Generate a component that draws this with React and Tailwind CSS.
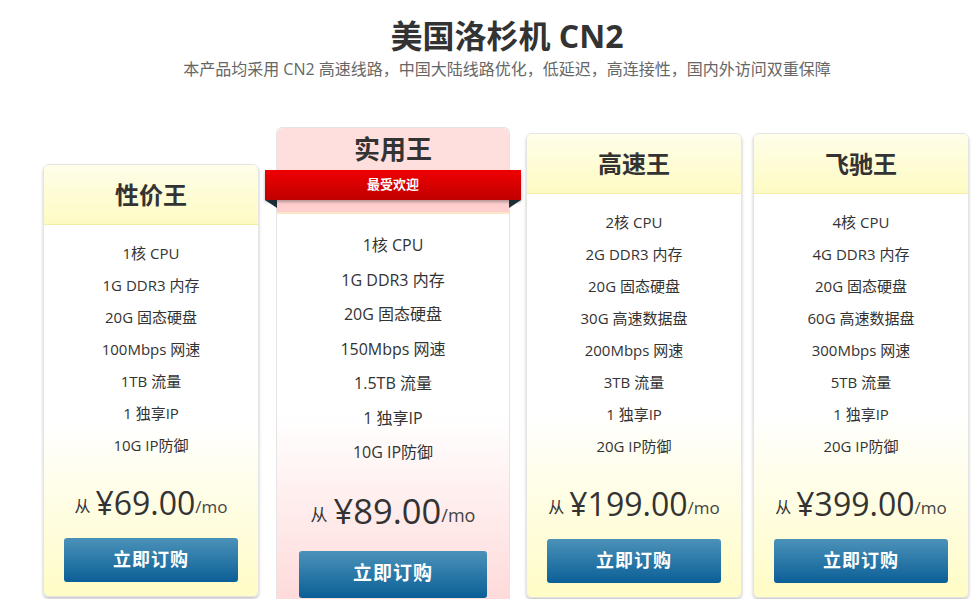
import React from 'react';

const plans = [
    {
        name: '性价王',
        features: ['1核 CPU', '1G DDR3 内存', '20G 固态硬盘', '100Mbps 网速', '1TB 流量', '1 独享IP', '10G IP防御'],
        price: '69.00',
        wrap: 'ml-[43px] mt-[37px]',
    },
    {
        name: '实用王',
        features: ['1核 CPU', '1G DDR3 内存', '20G 固态硬盘', '150Mbps 网速', '1.5TB 流量', '1 独享IP', '10G IP防御'],
        price: '89.00',
        featured: true,
        wrap: 'ml-[17px]',
    },
    {
        name: '高速王',
        features: ['2核 CPU', '2G DDR3 内存', '20G 固态硬盘', '30G 高速数据盘', '200Mbps 网速', '3TB 流量', '1 独享IP', '20G IP防御'],
        price: '199.00',
        wrap: 'ml-[16px] mt-[6px]',
    },
    {
        name: '飞驰王',
        features: ['4核 CPU', '4G DDR3 内存', '20G 固态硬盘', '60G 高速数据盘', '300Mbps 网速', '5TB 流量', '1 独享IP', '20G IP防御'],
        price: '399.00',
        wrap: 'ml-[11px] mt-[6px]',
    },
];

const PlanCard = ({ plan }) => (
    <div className={`${plan.wrap} w-[216px] shrink-0 rounded-[6px] border border-[#e4e4e4] shadow-[0_2px_3px_rgba(0,0,0,0.22)] bg-[linear-gradient(to_bottom,#ffffff_60%,#fffcc6)] overflow-hidden`}>
        {/* 头部 */}
        <div className="h-[60px] flex items-center justify-center bg-[linear-gradient(to_bottom,#fffeea,#fdfbc2)] border-b border-[#f1eda4]">
            <h3 className="text-[24px] font-bold text-[#333]">{plan.name}</h3>
        </div>
        <ul className="pt-[12px] text-center text-[15px] leading-[32px] text-[#333]">
            {plan.features.map((f) => (
                <li key={f}>{f}</li>
            ))}
        </ul>
        <div className="mt-[22px] h-[40px] flex items-center justify-center text-[#333]">
            <span className="text-[16px] mr-[5px] mt-[6px]">从</span>
            <span className="text-[32px] leading-none">¥{plan.price}</span>
            <span className="text-[17px] text-[#444] mt-[7px]">/mo</span>
        </div>
        <div className="px-[20px] pt-[15px] pb-[14px]">
            <button className="w-full h-[44px] rounded-[3px] bg-[linear-gradient(to_bottom,#4b92b9,#0b5f97)] text-white text-[18px] font-bold tracking-[1px] font-['Liberation_Serif','Noto_Sans_CJK_SC',serif]">
                立即订购
            </button>
        </div>
    </div>
);

const FeaturedCard = ({ plan }) => (
    <div className={`${plan.wrap} w-[234px] shrink-0 relative`}>
        <div className="rounded-t-[6px] border border-[#e4e4e4] border-b-0 bg-[linear-gradient(to_bottom,#ffffff_60%,#ffd9d9)] h-[480px]">
            <div className="h-[42px] flex items-center justify-center bg-[#ffdede] rounded-t-[6px]">
                <h3 className="text-[26px] font-bold text-[#333] mt-[1px]">{plan.name}</h3>
            </div>
            {/* 彩带 */}
            <div className="relative -mx-[12px] h-[30px] flex items-center justify-center bg-[linear-gradient(to_bottom,#ef0000,#c00000)] shadow-[0_2px_3px_rgba(0,0,0,0.3)]">
                <span className="text-white text-[13px] font-bold">最受欢迎</span>
                <svg className="absolute left-0 top-[30px]" width="12" height="8" viewBox="0 0 12 8">
                    <polygon points="0,0 12,0 12,8" fill="#1d2d35" />
                </svg>
                <svg className="absolute right-0 top-[30px]" width="12" height="8" viewBox="0 0 12 8">
                    <polygon points="0,0 12,0 0,8" fill="#1d2d35" />
                </svg>
            </div>
            <div className="h-[14px] bg-[#ffcfcf] border-b-[2px] border-[#fbe6c6]" />
            <ul className="pt-[14px] text-center text-[16px] leading-[34.5px] text-[#333]">
                {plan.features.map((f) => (
                    <li key={f}>{f}</li>
                ))}
            </ul>
            <div className="mt-[20px] h-[43px] flex items-center justify-center text-[#333]">
                <span className="text-[17px] mr-[6px] mt-[7px]">从</span>
                <span className="text-[34.5px] leading-none">¥{plan.price}</span>
                <span className="text-[18px] text-[#444] mt-[8px]">/mo</span>
            </div>
            <div className="px-[22px] pt-[18px]">
                <button className="w-full h-[47px] rounded-[3px] bg-[linear-gradient(to_bottom,#4b92b9,#0b5f97)] text-white text-[19px] font-bold tracking-[1px] font-['Liberation_Serif','Noto_Sans_CJK_SC',serif]">
                    立即订购
                </button>
            </div>
        </div>
    </div>
);

const App = () => {
    return (
        <div className="w-[973px] h-[599px] overflow-hidden bg-white font-['Open_Sans','Noto_Sans_CJK_SC',sans-serif]">
            <div className="pt-[16px] pl-[41px] text-center">
                <h1 className="text-[32px] leading-[40px] font-bold text-[#333]">美国洛杉机 CN2</h1>
                <p className="mt-[2px] text-[16px] leading-[22px] text-[#666]">
                    本产品均采用 CN2 高速线路，中国大陆线路优化，低延迟，高连接性，国内外访问双重保障
                </p>
            </div>
            <div className="mt-[47px] flex items-start">
                {plans.map((p) =>
                    p.featured ? <FeaturedCard key={p.name} plan={p} /> : <PlanCard key={p.name} plan={p} />
                )}
            </div>
        </div>
    );
};

export default App;
